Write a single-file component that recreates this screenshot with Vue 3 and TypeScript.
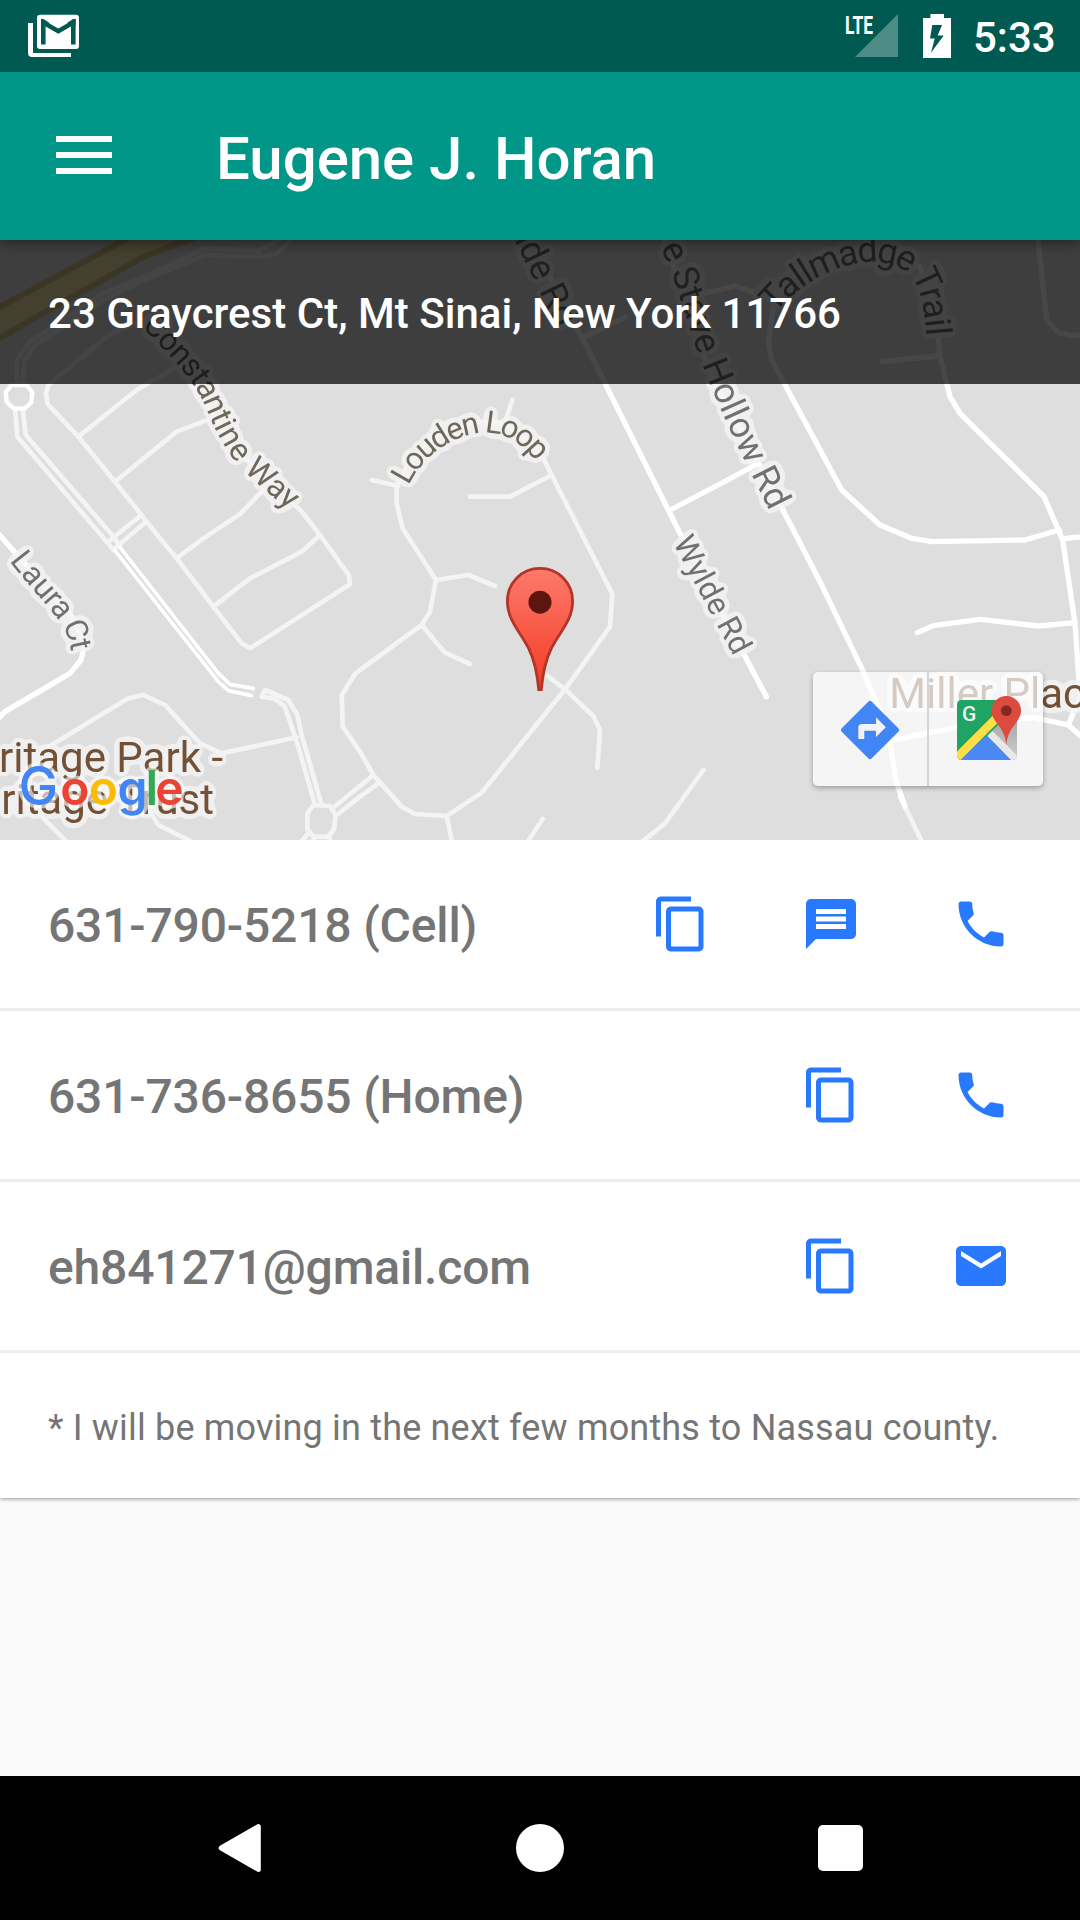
<script setup lang="ts">
type IconName = 'copy' | 'message' | 'call' | 'mail'

interface ContactRow {
  label: string
  actions: IconName[]
}

interface StreetLabel {
  id: string
  text: string
  path: string
  tone: 'warm' | 'grey'
  size: number
  dy: number
  anchorEnd?: boolean
}

const icons: Record<IconName, string> = {
  copy: 'M16 1H4c-1.1 0-2 .9-2 2v14h2V3h12V1zm3 4H8c-1.1 0-2 .9-2 2v14c0 1.1.9 2 2 2h11c1.1 0 2-.9 2-2V7c0-1.1-.9-2-2-2zm0 16H8V7h11v14z',
  message:
    'M20 2H4c-1.1 0-1.99.9-1.99 2L2 22l4-4h14c1.1 0 2-.9 2-2V4c0-1.1-.9-2-2-2zm-2 12H6v-2h12v2zm0-3H6V9h12v2zm0-3H6V6h12v2z',
  call: 'M6.62 10.79c1.44 2.83 3.76 5.14 6.59 6.59l2.2-2.2c.27-.27.67-.36 1.02-.24 1.12.37 2.33.57 3.57.57.55 0 1 .45 1 1V20c0 .55-.45 1-1 1-9.39 0-17-7.61-17-17 0-.55.45-1 1-1h3.5c.55 0 1 .45 1 1 0 1.25.2 2.45.57 3.57.11.35.03.74-.25 1.02l-2.2 2.2z',
  mail: 'M20 4H4c-1.1 0-1.99.9-1.99 2L2 18c0 1.1.9 2 2 2h16c1.1 0 2-.9 2-2V6c0-1.1-.9-2-2-2zm0 4l-8 5-8-5V6l8 5 8-5v2z',
}

const rows: ContactRow[] = [
  { label: '631-790-5218 (Cell)', actions: ['copy', 'message', 'call'] },
  { label: '631-736-8655 (Home)', actions: ['copy', 'call'] },
  { label: 'eh841271@gmail.com', actions: ['copy', 'mail'] },
]

/* Map geometry is expressed in thirds of a pixel. */
const minorRoads: string[] = [
  '835,30 775,62 615,55 410,150 310,190 90,335 50,390 50,460',
  '872,30 830,72 780,80 615,75 435,150 310,210 105,345 75,390 67,460',
  '775,62 780,80',
  '45,535 52,620 320,935 340,960',
  '68,535 77,615 345,925 355,945',
  '325,935 420,858',
  '345,955 438,875',
  '430,270 345,305 320,320 145,465 138,490 143,522 235,620 345,755 440,875 480,925 530,985 640,1130 725,1240 750,1255 1050,1063 1047,1037 960,915 905,845 870,810 740,690 700,650 620,520 530,400 430,270',
  '235,620 410,480 530,410',
  '345,755 530,605 640,563',
  '790,780 720,852 610,925 530,985',
  '640,1130 750,1045 905,965 960,915',
  '130,1560 385,1405 430,1395 495,1425 600,1540 665,1570 890,1522',
  '945,1725 895,1550 855,1430 825,1407 785,1400 795,1380 865,1410 892,1455 905,1515 965,1725',
  '940,1725 990,1728 1007,1755 1002,1797 985,1820 940,1820 922,1797 922,1750 940,1725',
  '995,1737 1080,1668 1120,1635',
  '1010,1755 1080,1700 1135,1660',
  '930,1805 903,1835',
  '945,1822 935,1840',
  '985,1820 995,1840',
  '120,1750 135,1770 200,1835',
  '450,1745 475,1785 575,1835',
  '1265,1185 1080,1320 1065,1332 1025,1395 1028,1490 1080,1565 1120,1635 1205,1730 1245,1752 1340,1758 1445,1688 1695,1378 1830,1190 1837,1092 1655,735 1630,685 1590,640 1510,578 1430,575 1300,620 1215,720 1190,770 1190,820 1208,895 1230,930 1308,1050 1290,1145 1265,1185',
  '1308,1050 1405,1035 1485,1068',
  '1265,1185 1335,1268 1410,1302',
  '1340,1758 1357,1840',
  '1580,1840 1628,1767',
  '1920,1840 1995,1780 2110,1620',
  '1620,1320 1695,1378 1780,1458 1800,1500 1792,1613',
  '1115,750 1195,768',
  '1410,800 1530,800 1655,735',
  '1537,510 1515,578',
  '2700,1700 2715,1730 2768,1840',
]

const majorRoads: string[] = [
  '-10,905 60,985 215,1160 255,1240 243,1290 210,1330 15,1445 -20,1480',
  '1590,30 1745,320 2035,900 2299,1400',
  '1745,325 1875,262',
  '2010,840 2160,762 2275,700',
  '1990,20 2060,230 2130,430 2270,690 2380,900 2460,1055 2590,1325 2665,1500 2687,1650 2715,1730',
  '2090,195 2205,168 2300,200',
  '2325,200 2305,335 2315,390 2525,780 2640,885 2735,925 2795,935 3075,930 3178,900',
  '2325,200 2420,110 2560,60 2680,60 2760,110 2800,230 2815,320 2820,380 2850,500 2880,550 3132,800 3188,930 3225,1180 3240,1400 3205,1485',
  '3190,926 3250,920',
  '2647,395 2815,378',
  '3113,20 3140,270 3175,308 3215,317 3250,314',
  '2752,1208 2800,1187 2940,1168 3115,1188 3225,1178',
  '2680,1530 2880,1490 3100,1462 3205,1485 3250,1525',
]

const laneRoads: string[] = [
  '345,962 655,1355 685,1382 755,1397',
  '360,952 655,1330 690,1363 760,1375',
]

/* Label paths run through the middle of the letters; dy drops them to the baseline. */
const streetLabels: StreetLabel[] = [
  { id: 'constantine', text: 'Constantine Way', tone: 'warm', size: 95, dy: 34, path: 'M450 264 C520 345 590 400 640 500 C675 580 700 645 762 704 C800 742 850 782 930 850' },
  { id: 'louden', text: 'Louden Loop', tone: 'warm', size: 93, dy: 33, path: 'M1197 751 C1248 640 1368 572 1463 575 C1548 578 1603 630 1658 705' },
  { id: 'wylde', text: 'Wylde Rd', tone: 'grey', size: 94, dy: 33, path: 'M2047 922 L2260 1319' },
  { id: 'stave', text: 'e Stave Hollow Rd', tone: 'grey', size: 107, dy: 30, anchorEnd: true, path: 'M1960 -80 L2018 60 C2058 145 2088 260 2113 332 C2146 430 2184 515 2246 650 L2336 830' },
  { id: 'hillside', text: 'ide Rd', tone: 'grey', size: 108, dy: 38, anchorEnd: true, path: 'M1521 -105 L1707 280' },
  { id: 'tallmadge', text: 'Tallmadge Trail', tone: 'grey', size: 107, dy: 30, path: 'M2303 230 C2370 147 2470 90 2560 72 C2650 52 2740 80 2774 145 C2798 195 2808 260 2814 400' },
  { id: 'laura', text: 'Laura Ct', tone: 'grey', size: 94, dy: 33, path: 'M54 972 C98 1030 158 1095 198 1145 C228 1185 243 1215 254 1310' },
]

const googleLetters = [
  { ch: 'G', x: 18.6, size: 53, weight: 500, color: '#4285f4' },
  { ch: 'o', x: 60.3, size: 48, weight: 600, color: '#ea4335' },
  { ch: 'o', x: 88.8, size: 48, weight: 600, color: '#fbbc05' },
  { ch: 'g', x: 117.6, size: 48, weight: 600, color: '#4285f4' },
  { ch: 'l', x: 145.6, size: 48, weight: 600, color: '#34a853' },
  { ch: 'e', x: 155.2, size: 48, weight: 600, color: '#ea4335' },
]
</script>

<template>
  <div class="screen">
    <header class="status">
      <svg class="gmail" width="52" height="44" viewBox="28 14 52 44">
        <path d="M28 23h5v30h38v4H32q-4 0-4-4z" fill="#fff" />
        <rect x="37" y="14.7" width="42" height="34.3" rx="3" fill="#fff" />
        <path d="M43.3 44.5V22.5L58.3 31.2L73.3 22.5V44.5" fill="none" stroke="#005a52" stroke-width="4.6" />
        <path d="M41 19h2.5l6 4-6 3H41zM75.6 19H73l-6 4 6 3h2.6z" fill="#005a52" />
      </svg>
      <div class="indicators">
        <svg width="56" height="72" viewBox="843 0 56 72">
          <path d="M855 57L898 14V57z" fill="#fff" fill-opacity=".3" />
          <text x="845" y="33.7" class="lte" textLength="28" lengthAdjust="spacingAndGlyphs">LTE</text>
        </svg>
        <svg class="battery" width="28" height="72" viewBox="923 0 28 72">
          <path
            fill="#fff"
            fill-rule="evenodd"
            d="M930.4 14H944V18H951V58H923V18H930.4zM932.3 25L930 38.5H934.7L931 52.7L943.7 35.5H937.7L942 25z"
          />
        </svg>
        <span class="clock">5:33</span>
      </div>
    </header>

    <div class="appbar">
      <div class="menu"><i></i><i></i><i></i></div>
      <h1>Eugene J. Horan</h1>
    </div>

    <section class="map">
      <svg class="canvas" width="1080" height="600" viewBox="0 30 3240 1800">
        <defs>
          <path v-for="l in streetLabels" :id="l.id" :key="l.id" :d="l.path" />
          <filter id="label-halo" filterUnits="userSpaceOnUse" x="-60" y="-30" width="3360" height="1920" color-interpolation-filters="sRGB">
            <feGaussianBlur in="SourceAlpha" stdDeviation="9.5" />
            <feComponentTransfer result="spread"><feFuncA type="linear" slope="40" intercept="-1" /></feComponentTransfer>
            <feFlood flood-color="#f4f4f4" flood-opacity=".85" />
            <feComposite in2="spread" operator="in" result="halo" />
            <feMerge>
              <feMergeNode in="halo" />
              <feMergeNode in="SourceGraphic" />
            </feMerge>
          </filter>
        </defs>
        <path d="M-30 246L125 164L400 15H610Q490 55 425 84L140 244L-30 341z" class="highway" />
        <g class="roads minor"><polyline v-for="p in minorRoads" :key="p" :points="p" /></g>
        <g class="roads major"><polyline v-for="p in majorRoads" :key="p" :points="p" /></g>
        <g class="roads lane">
          <polyline v-for="p in laneRoads" :key="p" :points="p" />
        </g>
        <polygon class="circle" points="35,465 80,465 97,487 94,517 75,535 40,535 20,515 17,487" />
        <g filter="url(#label-halo)">
          <text
            v-for="l in streetLabels"
            :key="l.id"
            :class="l.tone"
            :font-size="l.size"
            :text-anchor="l.anchorEnd ? 'end' : 'start'"
          >
            <textPath :href="'#' + l.id" :startOffset="l.anchorEnd ? '100%' : '0'"><tspan :dy="l.dy">{{ l.text }}</tspan></textPath>
          </text>
          <text class="place" x="669" y="1625" text-anchor="end">ritage Park -</text>
          <text class="place" x="642" y="1751" text-anchor="end">ritage Trust</text>
          <text class="place" x="2668" y="1433">Miller Place</text>
        </g>
      </svg>

      <svg class="marker" width="70" height="126" viewBox="505 565 70 126">
        <defs>
          <linearGradient id="pin" x1="0" y1="0" x2="0" y2="1">
            <stop offset="0" stop-color="#fd7a6c" />
            <stop offset="1" stop-color="#f33b24" />
          </linearGradient>
        </defs>
        <path
          d="M540 568.4C521.5 568.4 507.4 583 507.4 601C507.4 620 519 630 528.5 648C535 661 537.5 676 538.7 689.5H541.3C542.5 676 545 661 551.5 648C561 630 572.6 620 572.6 601C572.6 583 558.5 568.4 540 568.4z"
          fill="url(#pin)"
          stroke="#b33527"
          stroke-width="2.8"
        />
        <circle cx="540" cy="602.2" r="11.5" fill="#5d160f" />
      </svg>

      <svg class="google" width="185" height="65" viewBox="10 760 185 65">
        <defs>
          <filter id="logo-halo" x="-10%" y="-30%" width="120%" height="160%" color-interpolation-filters="sRGB">
            <feGaussianBlur in="SourceAlpha" stdDeviation="2.4" />
            <feComponentTransfer result="spread"><feFuncA type="linear" slope="16" intercept="-0.6" /></feComponentTransfer>
            <feFlood flood-color="#fff" flood-opacity=".6" />
            <feComposite in2="spread" operator="in" result="halo" />
            <feMerge>
              <feMergeNode in="halo" />
              <feMergeNode in="SourceGraphic" />
            </feMerge>
          </filter>
        </defs>
        <text class="google-text" y="805" filter="url(#logo-halo)">
          <tspan v-for="l in googleLetters" :key="l.x" :x="l.x" :font-size="l.size" :font-weight="l.weight" :fill="l.color">{{ l.ch }}</tspan>
        </text>
      </svg>

      <div class="address">23 Graycrest Ct, Mt Sinai, New York 11766</div>

      <div class="map-buttons">
        <div class="map-button">
          <svg width="60" height="60" viewBox="840 700 60 60">
            <path d="M870 703.5L896.5 730L870 756.5L843.5 730z" fill="#4285f4" stroke="#4285f4" stroke-width="5" stroke-linejoin="round" />
            <path d="M858.3 739V727.5Q858.3 724 861.8 724H876V717.3L885.8 727.3L876 737V730.7H864.3V739z" fill="#f1f3f7" />
          </svg>
        </div>
        <div class="map-button">
          <svg width="68" height="68" viewBox="955 694 68 68">
            <defs>
              <clipPath id="tile"><rect x="957" y="700" width="60" height="60" rx="4.5" /></clipPath>
              <linearGradient id="fold" x1="0" y1="0" x2="0" y2="1">
                <stop offset="0" stop-color="#999" />
                <stop offset="1" stop-color="#cfcfcf" />
              </linearGradient>
            </defs>
            <g clip-path="url(#tile)">
              <rect x="957" y="700" width="60" height="60" fill="#1fa463" />
              <path d="M987 736L1017 706V760z" fill="url(#fold)" />
              <path d="M957 760L987 735.5L1012 760z" fill="#4a89f3" />
              <path d="M987.5 736L992.5 731L1019 757.5L1014 763z" fill="#e8e8ea" />
              <path d="M955 759.5L1000 714.5" stroke="#ffdd44" stroke-width="8.5" />
            </g>
            <text x="962" y="720.5" class="tile-g">G</text>
            <path d="M1006.3 745C1005 732 1000 728 995 720.5C992 716 991.6 713 991.6 710.6A14.7 14.7 0 0 1 1021 710.6C1021 713 1020.6 716 1017.6 720.5C1012.6 728 1007.6 732 1006.3 745z" fill="#dd4b3e" />
            <circle cx="1006.3" cy="710.6" r="5.4" fill="#822b26" />
          </svg>
        </div>
      </div>
    </section>

    <section class="card">
      <div v-for="row in rows" :key="row.label" class="row">
        <span class="row-label">{{ row.label }}</span>
        <div class="actions">
          <svg v-for="a in row.actions" :key="a" width="60" height="60" viewBox="0 0 24 24">
            <path :d="icons[a]" fill="#2979ff" />
          </svg>
        </div>
      </div>
      <p class="note">* I will be moving in the next few months to Nassau county.</p>
    </section>

    <main class="rest"></main>

    <nav class="navbar">
      <div class="nav-item">
        <svg width="48" height="48" viewBox="0 0 48 48">
          <path d="M5.2 24L42.3 2.6V45.4z" fill="#fff" stroke="#fff" stroke-width="5" stroke-linejoin="round" />
        </svg>
      </div>
      <div class="nav-item"><span class="home"></span></div>
      <div class="nav-item"><span class="recents"></span></div>
    </nav>
  </div>
</template>

<style>
body {
  margin: 0;
}
</style>

<style scoped>
.screen {
  width: 1080px;
  height: 1920px;
  display: flex;
  flex-direction: column;
  overflow: hidden;
  background: #fafafa;
  font-family: Roboto, 'Noto Sans', sans-serif;
}
svg {
  display: block;
}
.status {
  flex: none;
  position: relative;
  z-index: 3;
  height: 72px;
  display: flex;
  justify-content: space-between;
  align-items: center;
  padding: 0 24px 0 28px;
  background: #005a52;
}
.indicators {
  display: flex;
  align-items: center;
}
.lte {
  font-weight: 700;
  font-size: 26.5px;
  fill: #fff;
}
.battery {
  margin: 0 22px 0 24px;
}
.clock {
  padding-top: 3px;
  width: 83px;
  color: #fff;
  font-size: 42px;
  font-weight: 500;
}
.appbar {
  flex: none;
  position: relative;
  z-index: 2;
  height: 168px;
  display: flex;
  align-items: center;
  padding-left: 56px;
  background: #009688;
  box-shadow: 0 3px 12px rgba(0, 0, 0, 0.45);
}
.menu {
  display: flex;
  flex-direction: column;
  gap: 10px;
  margin-right: 104px;
  margin-bottom: 2px;
}
.menu i {
  width: 56px;
  height: 6px;
  background: #fff;
}
h1 {
  margin: 0;
  padding-top: 5px;
  color: #fff;
  font-size: 60px;
  font-weight: 500;
  letter-spacing: -0.04px;
}
.map {
  flex: none;
  position: relative;
  height: 600px;
  background: #dedede;
  overflow: hidden;
}
.highway {
  fill: #f6e0ac;
  stroke: #d5bf8a;
  stroke-width: 18;
}
.roads polyline {
  fill: none;
  stroke-linecap: round;
  stroke-linejoin: round;
}
.minor polyline {
  stroke: #f4f4f4;
  stroke-width: 14;
}
.major polyline {
  stroke: #fff;
  stroke-width: 16;
}
.lane polyline {
  stroke: #fff;
  stroke-width: 11;
}
.circle {
  fill: #dedede;
  stroke: #fff;
  stroke-width: 13;
}
.warm {
  fill: #6e675a;
}
.grey {
  fill: #707070;
}
.place {
  font-size: 126px;
  fill: #725137;
}
.marker {
  position: absolute;
  left: 505px;
  top: 325px;
}
.google {
  position: absolute;
  left: 10px;
  top: 520px;
}
.google-text {
  font-family: Inter, sans-serif;
}
.address {
  position: absolute;
  left: 0;
  right: 0;
  top: 0;
  height: 144px;
  box-sizing: border-box;
  display: flex;
  align-items: center;
  padding: 3px 48px 0;
  background: rgba(0, 0, 0, 0.72);
  color: #fff;
  font-size: 42px;
  font-weight: 500;
  letter-spacing: 0.02px;
  white-space: nowrap;
}
.map-buttons {
  position: absolute;
  right: 37px;
  top: 432px;
  width: 230px;
  height: 114px;
  display: flex;
  border-radius: 5px;
  background: rgba(255, 255, 255, 0.7);
  box-shadow: 0 2px 5px rgba(0, 0, 0, 0.3);
}
.map-button {
  width: 114px;
  box-sizing: border-box;
  display: flex;
  align-items: center;
  justify-content: center;
  padding-top: 2px;
}
.map-button:last-child {
  width: 116px;
  border-left: 2px solid #d4d4d4;
  padding: 0 0 2px 6px;
}
.tile-g {
  font-size: 21px;
  font-weight: 500;
  fill: #f1f1f1;
}
.card {
  flex: none;
  background: #fff;
  box-shadow: 0 1px 4px rgba(0, 0, 0, 0.4);
}
.row {
  height: 168px;
  display: flex;
  align-items: center;
  justify-content: space-between;
  padding: 0 69px 0 48px;
  border-bottom: 3px solid #ededed;
}
.row-label {
  padding-top: 3px;
  color: #757575;
  font-size: 48px;
  font-weight: 500;
  letter-spacing: -0.17px;
}
.actions {
  display: flex;
  gap: 90px;
}
.note {
  margin: 0;
  height: 145px;
  box-sizing: border-box;
  display: flex;
  align-items: center;
  padding: 4px 48px 0;
  color: #757575;
  font-size: 36px;
  letter-spacing: 0.18px;
  white-space: nowrap;
}
.rest {
  flex: 1;
}
.navbar {
  flex: none;
  height: 144px;
  display: flex;
  justify-content: center;
  background: #000;
}
.nav-item {
  width: 300px;
  display: flex;
  align-items: center;
  justify-content: center;
}
.home {
  width: 48px;
  height: 48px;
  border-radius: 50%;
  background: #fff;
}
.recents {
  width: 45px;
  height: 46px;
  border-radius: 5px;
  background: #fff;
}
</style>
